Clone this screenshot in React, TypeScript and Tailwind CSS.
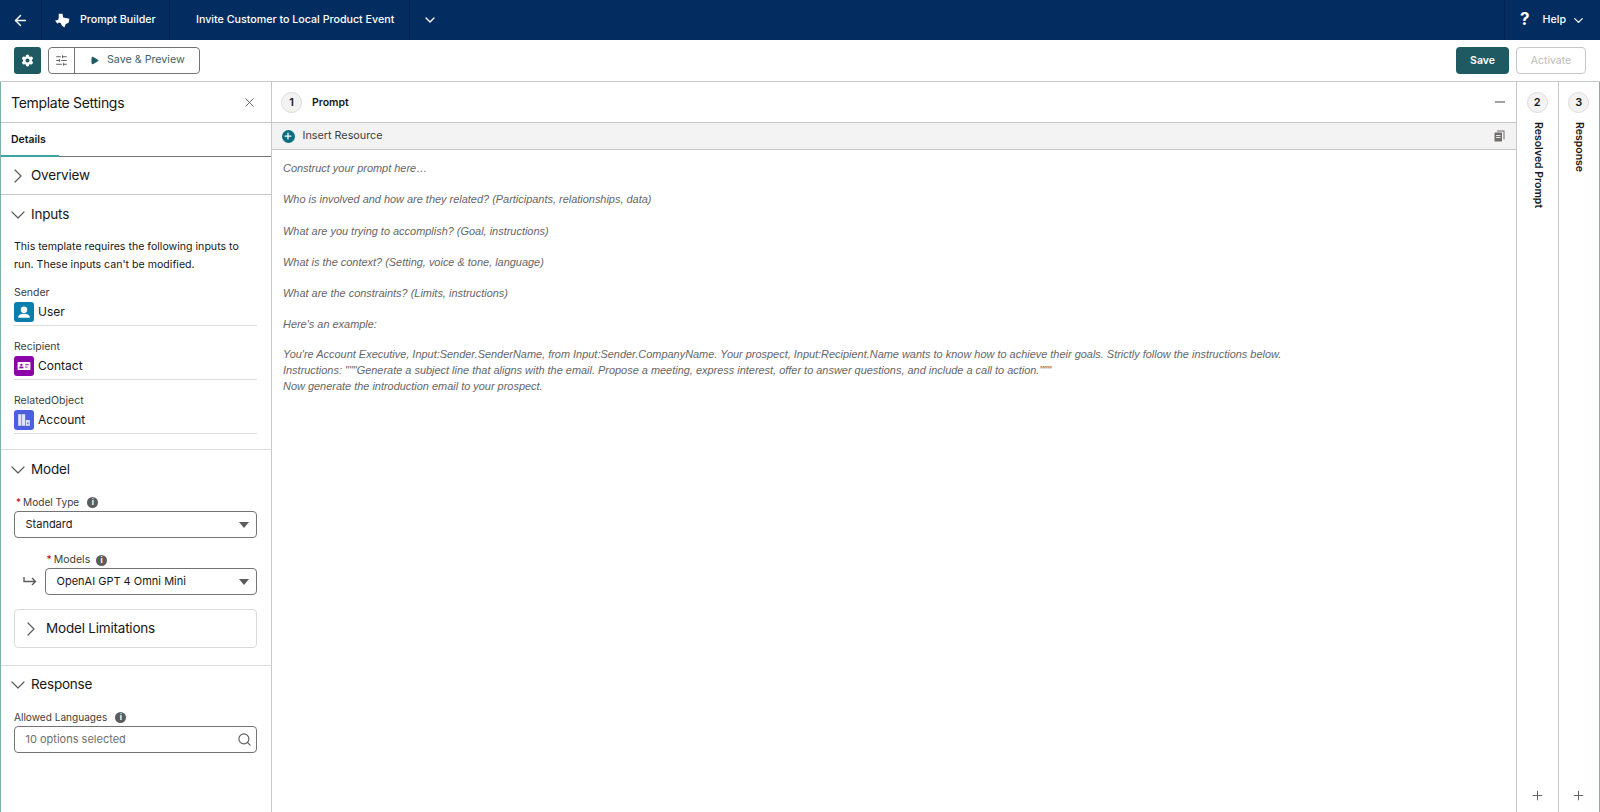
import React from 'react';
import { ArrowLeft, ChevronDown, ChevronRight, SlidersHorizontal, Play, X, Minus, Plus, Search } from 'lucide-react';

const GearIcon = () => (
  <svg width="13" height="13" viewBox="0 0 24 24" fill="white" stroke="white" strokeWidth="2">
    <path d="M12.22 2h-.44a2 2 0 0 0-2 2v.18a2 2 0 0 1-1 1.73l-.43.25a2 2 0 0 1-2 0l-.15-.08a2 2 0 0 0-2.73.73l-.22.38a2 2 0 0 0 .73 2.73l.15.1a2 2 0 0 1 1 1.72v.51a2 2 0 0 1-1 1.74l-.15.09a2 2 0 0 0-.73 2.73l.22.38a2 2 0 0 0 2.73.73l.15-.08a2 2 0 0 1 2 0l.43.25a2 2 0 0 1 1 1.73V20a2 2 0 0 0 2 2h.44a2 2 0 0 0 2-2v-.18a2 2 0 0 1 1-1.73l.43-.25a2 2 0 0 1 2 0l.15.08a2 2 0 0 0 2.73-.73l.22-.39a2 2 0 0 0-.73-2.73l-.15-.08a2 2 0 0 1-1-1.74v-.5a2 2 0 0 1 1-1.74l.15-.09a2 2 0 0 0 .73-2.73l-.22-.38a2 2 0 0 0-2.73-.73l-.15.08a2 2 0 0 1-2 0l-.43-.25a2 2 0 0 1-1-1.73V4a2 2 0 0 0-2-2z" />
    <circle cx="12" cy="12" r="3.6" fill="#1f5a62" stroke="none" />
  </svg>
);

// prompt builder logo, roughly a map-of-texas blob
const BuilderLogo = () => (
  <svg width="15" height="15" viewBox="0 0 24 24" fill="white">
    <path d="M6 1h6l1 6 10 2-1 6-5 3-2 5-4-3-2-4-3-1-2 2-4-5 5-1 1-4z" />
  </svg>
);

const UserIcon = () => (
  <span className="w-5 h-5 rounded-[3px] bg-[#0b7fab] flex items-center justify-center shrink-0">
    <svg width="14" height="14" viewBox="0 0 24 24" fill="white">
      <circle cx="12" cy="8" r="5.5" />
      <path d="M2 22c0-5 4-7 10-7s10 2 10 7z" />
    </svg>
  </span>
);

const ContactIcon = () => (
  <span className="w-5 h-5 rounded-[3px] bg-[#8a04a8] flex items-center justify-center shrink-0">
    <svg width="14" height="14" viewBox="0 0 24 24">
      <rect x="1" y="5" width="22" height="14" rx="1.5" fill="white" />
      <circle cx="7.5" cy="10" r="2" fill="#8a04a8" />
      <rect x="4" y="13" width="7" height="3" fill="#8a04a8" />
      <rect x="14" y="9" width="6" height="1.6" fill="#8a04a8" />
      <rect x="14" y="13" width="4" height="1.6" fill="#8a04a8" />
    </svg>
  </span>
);

const AccountIcon = () => (
  <span className="w-5 h-5 rounded-[3px] bg-[#4c5fe0] flex items-center justify-center shrink-0">
    <svg width="14" height="14" viewBox="0 0 24 24" fill="#dfe3fb">
      <rect x="2" y="2" width="5.5" height="20" />
      <rect x="8.5" y="2" width="5.5" height="20" />
      <path d="M15 12h7v10h-7z" />
      <rect x="17.5" y="16" width="2" height="3" fill="#4c5fe0" />
    </svg>
  </span>
);

const CopyIcon = () => (
  <svg width="11" height="12" viewBox="0 0 22 24" fill="#706e6b">
    <path d="M6 1h15v18h-2V3H6z" />
    <rect x="1" y="5" width="15" height="18" rx="1" />
    <rect x="4" y="10" width="9" height="1.8" fill="#f3f3f3" />
    <rect x="4" y="14" width="9" height="1.8" fill="#f3f3f3" />
  </svg>
);

const HookArrow = () => (
  <svg width="14" height="11" viewBox="0 0 14 11" fill="none" stroke="#5c5c5c" strokeWidth="1.4" className="shrink-0 mr-[8px]">
    <path d="M1 1v4.5h11.5M9 2l3.5 3.5L9 9" />
  </svg>
);

const InfoDot = () => (
  <span className="w-[11px] h-[11px] rounded-full bg-[#5c5c5c] flex items-center justify-center text-white text-[8px] leading-none font-bold">i</span>
);

const SectionHead = ({ title, open = true }: { title: string; open?: boolean }) => (
  <div className="flex items-center h-[19px]">
    <span className="w-[30px] pl-[4.5px] shrink-0 text-[#5c5c5c]">
      {open ? <ChevronDown size={24} strokeWidth={1.2} /> : <ChevronRight size={24} strokeWidth={1.2} />}
    </span>
    <span className="text-[13.5px] tracking-[-0.2px] text-[#181818]">{title}</span>
  </div>
);

const InputRow = ({ label, name, icon }: { label: string; name: string; icon: React.ReactNode }) => (
  <div className="ml-[13px] mr-[13.5px] h-[54px]">
    <div className="text-[10.5px] leading-[16px] text-[#3e3e3c]">{label}</div>
    <div className="flex items-center gap-[4px] h-[23px] mt-[1.5px] border-b-[1.5px] border-[#dddbda] pb-[3px] text-[12px] text-[#181818]">
      {icon}
      {name}
    </div>
  </div>
);

const SelectBox = ({ value, className }: { value: string; className: string }) => (
  <div className={`h-[27px] border border-[#747474] rounded-[4px] flex items-center justify-between pl-[10.5px] pr-[7px] text-[11px] text-[#181818] ${className}`}>
    {value}
    <span className="w-0 h-0 border-x-[5px] border-x-transparent border-t-[6px] border-t-[#5c5c5c]" />
  </div>
);

const StepCircle = ({ n }: { n: number }) => (
  <span className="w-[21px] h-[21px] rounded-full bg-[#f3f3f3] border border-[#dddbda] flex items-center justify-center text-[11px] font-semibold text-[#181818]">{n}</span>
);

const SideColumn = ({ n, label }: { n: number; label: string }) => (
  <div className="w-[41.5px] border-l border-[#c9c7c5] flex flex-col items-center pt-[10px] pb-[9px]">
    <StepCircle n={n} />
    <span className="mt-[9px] [writing-mode:vertical-rl] text-[10.5px] font-semibold text-[#181818] leading-none">{label}</span>
    <Plus size={15} strokeWidth={1.5} className="mt-auto text-[#5c5c5c]" />
  </div>
);

const PROMPT_LINES = [
  'Construct your prompt here…',
  'Who is involved and how are they related? (Participants, relationships, data)',
  'What are you trying to accomplish? (Goal, instructions)',
  'What is the context? (Setting, voice & tone, language)',
  'What are the constraints? (Limits, instructions)',
];

const App: React.FC = () => {
  return (
    <div className="h-[812px] w-[1600px] overflow-hidden flex flex-col bg-white font-['Inter',sans-serif]">
      {/* Top nav */}
      <header className="h-[40px] bg-[#032d60] text-white flex items-center shrink-0 text-[10.7px] font-medium">
        <div className="w-[42px] h-full flex items-center justify-center border-r border-[#02254f]">
          <ArrowLeft size={17} strokeWidth={2} />
        </div>
        <div className="h-full w-[128px] flex items-center pl-[13px] gap-[10px] border-r border-[#02254f]">
          <BuilderLogo />
          <span className="whitespace-nowrap">Prompt Builder</span>
        </div>
        <div className="h-full w-[240px] flex items-center pl-[26px] border-r border-[#02254f] whitespace-nowrap">
          Invite Customer to Local Product Event
        </div>
        <div className="pl-[12px]">
          <ChevronDown size={16} strokeWidth={2} />
        </div>
        <div className="ml-auto h-full w-[96px] flex items-center pl-[15px] border-l border-[#02254f]">
          <span className="text-[17px] font-bold mr-[13px]">?</span>
          <span>Help</span>
          <ChevronDown size={15} strokeWidth={2} className="ml-[5px]" />
        </div>
      </header>

      {/* Toolbar */}
      <div className="h-[42px] shrink-0 flex items-center pl-[14px] pr-[14px] border-b border-[#c9c7c5]">
        <button className="w-[27px] h-[27px] rounded-[3px] bg-[#1f5a62] flex items-center justify-center">
          <GearIcon />
        </button>
        <div className="ml-[7px] w-[152px] h-[27px] rounded-[4px] border border-[#747474] flex items-center">
          <span className="w-[26px] h-full border-r border-[#747474] flex items-center justify-center text-[#444]">
            <SlidersHorizontal size={13} strokeWidth={1.5} />
          </span>
          <Play size={9} fill="#1f5a62" stroke="#1f5a62" className="ml-[15px]" />
          <span className="ml-[8px] text-[10.7px] text-[#3c6268] whitespace-nowrap">Save &amp; Preview</span>
        </div>
        <button className="ml-auto w-[53px] h-[27px] rounded-[4px] bg-[#1f5a62] text-white text-[10.5px] font-semibold">Save</button>
        <button className="ml-[7px] w-[70px] h-[27px] rounded-[4px] border border-[#c9c7c5] text-[#bdbbb9] text-[10.5px]">Activate</button>
      </div>

      <div className="flex-1 flex min-h-0 border-x-[1.5px] border-x-[#7fb0a8]">
        {/* Template settings panel */}
        <aside className="w-[270.5px] shrink-0 border-r border-[#c9c7c5] flex flex-col">
          <div className="h-[41px] flex items-center justify-between pl-[10px] pr-[14px] border-b border-[#c9c7c5]">
            <span className="text-[14px] tracking-[-0.3px] text-[#181818]">Template Settings</span>
            <X size={15} strokeWidth={1.5} className="text-[#5c5c5c]" />
          </div>
          <div className="h-[34px] border-b border-[#747474] relative flex items-center pl-[10px] text-[10.5px] font-semibold text-[#181818]">
            Details
            <span className="absolute left-0 -bottom-px w-[58px] h-[2px] bg-[#3ba4a0]" />
          </div>
          <div className="h-[38px] border-b border-[#c9c7c5] flex items-center">
            <SectionHead title="Overview" open={false} />
          </div>

          <div className="pt-[10px] border-b border-[#dddbda] h-[255px]">
            <SectionHead title="Inputs" />
            <p className="ml-[13px] mr-[20px] mt-[14px] text-[10.6px] leading-[18px] text-[#181818]">
              This template requires the following inputs to run. These inputs can't be modified.
            </p>
            <div className="mt-[11px]">
              <InputRow label="Sender" name="User" icon={<UserIcon />} />
              <InputRow label="Recipient" name="Contact" icon={<ContactIcon />} />
              <InputRow label="RelatedObject" name="Account" icon={<AccountIcon />} />
            </div>
          </div>

          <div className="pt-[10px] border-b border-[#dddbda] h-[216px]">
            <SectionHead title="Model" />
            <div className="ml-[15px] mt-[15px] flex items-center text-[10.1px] leading-[16px] text-[#3e3e3c]">
              <span className="text-[#ba0517] mr-[2px]">*</span>Model Type
              <span className="ml-[8px]"><InfoDot /></span>
            </div>
            <SelectBox value="Standard" className="ml-[13px] mr-[13.5px] mt-[1px]" />
            <div className="ml-[45.5px] mt-[14px] flex items-center text-[10.5px] leading-[16px] text-[#3e3e3c]">
              <span className="text-[#ba0517] mr-[2px]">*</span>Models
              <span className="ml-[6px]"><InfoDot /></span>
            </div>
            <div className="flex items-center ml-[22px] mr-[13.5px]">
              <HookArrow />
              <SelectBox value="OpenAI GPT 4 Omni Mini" className="flex-1" />
            </div>
            <div className="ml-[13px] mr-[13.5px] mt-[14px] h-[39px] border border-[#dddbda] rounded-[4px] flex items-center">
              <span className="w-[31px] pl-[4px] shrink-0 text-[#5c5c5c]">
                <ChevronRight size={24} strokeWidth={1.2} />
              </span>
              <span className="text-[13.5px] tracking-[-0.2px] text-[#181818]">Model Limitations</span>
            </div>
          </div>

          <div className="pt-[9px]">
            <SectionHead title="Response" />
            <div className="ml-[13px] mt-[15px] flex items-center text-[10.1px] leading-[16px] text-[#3e3e3c]">
              Allowed Languages
              <span className="ml-[8px]"><InfoDot /></span>
            </div>
            <div className="ml-[13px] mr-[13.5px] mt-[1px] h-[27px] border border-[#747474] rounded-[4px] flex items-center justify-between pl-[10.5px] pr-[4px] text-[11px] text-[#706e6b]">
              10 options selected
              <Search size={15} strokeWidth={1.8} className="text-[#5c5c5c]" />
            </div>
          </div>
        </aside>

        {/* Prompt workspace */}
        <main className="flex-1 min-w-0 flex flex-col">
          <div className="h-[40px] flex items-center pl-[9.5px] pr-[8px] shrink-0">
            <StepCircle n={1} />
            <span className="ml-[10px] pt-[1px] text-[10.5px] font-semibold text-[#181818]">Prompt</span>
            <Minus size={16} strokeWidth={1.5} className="ml-auto text-[#444]" />
          </div>
          <div className="h-[28px] shrink-0 bg-[#f3f3f3] border-y border-[#c9c7c5] flex items-center pl-[10px] pr-[11px]">
            <span className="w-[13px] h-[13px] rounded-full bg-[#0b6d80] flex items-center justify-center">
              <Plus size={10} strokeWidth={3} className="text-white" />
            </span>
            <span className="ml-[8px] pt-[1px] text-[10.8px] text-[#3e3e3c]">Insert Resource</span>
            <span className="ml-auto flex"><CopyIcon /></span>
          </div>
          <div className="pl-[11.5px] pt-[10px] font-['Liberation_Sans',sans-serif] italic text-[10.95px] leading-[16.2px] text-[#666]">
            {PROMPT_LINES.map((line) => (
              <p key={line} className="mb-[15.1px]">{line}</p>
            ))}
            <p className="mb-[13px]">Here's an example:</p>
            <p className="whitespace-nowrap">You're Account Executive, Input:Sender.SenderName, from Input:Sender.CompanyName. Your prospect, Input:Recipient.Name wants to know how to achieve their goals. Strictly follow the instructions below.</p>
            <p className="whitespace-nowrap">Instructions: """Generate a subject line that aligns with the email. Propose a meeting, express interest, offer to answer questions, and include a call to action."""</p>
            <p className="whitespace-nowrap">Now generate the introduction email to your prospect.</p>
          </div>
        </main>

        <SideColumn n={2} label="Resolved Prompt" />
        <SideColumn n={3} label="Response" />
      </div>
    </div>
  );
};

export default App;
